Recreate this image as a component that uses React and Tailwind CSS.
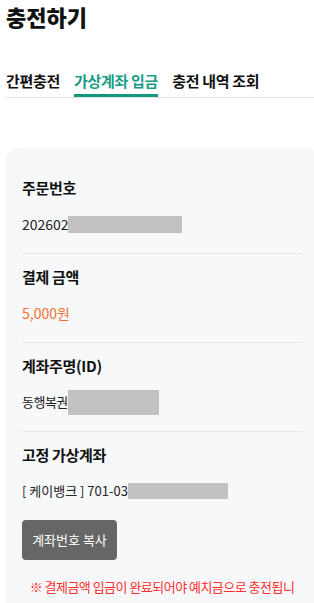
import React from 'react';

const Redact = ({ className }) => (
  <span className={`inline-block shrink-0 bg-[#c1c1c1] ${className}`} />
);

const Section = ({ label, children, first, last }) => (
  <div className={`${first ? 'pt-[18px]' : 'pt-[12px]'} ${last ? '' : 'pb-[18px] border-b border-[#e3e4e6]'}`}>
    <div className="text-[15px] font-bold leading-[22px] text-[#111] tracking-[-0.02em]">{label}</div>
    <div className="mt-[14px] h-[22px] text-[14px] leading-[22px] text-[#222] flex items-center">{children}</div>
  </div>
);

export default function App() {
  return (
    <div className="w-[314px] h-[603px] overflow-hidden bg-white font-['Noto_Sans_CJK_KR',sans-serif]">
      <h1 className="pl-[6px] text-[22px] leading-[32px] font-black text-[#111]">충전하기</h1>

      <div className="ml-[6px] mt-[39px] flex gap-[14px] border-b border-[#e2e2e2] text-[15px] font-bold tracking-[-0.02em]">
        <button className="pb-[3px] leading-[20px] border-b-[3px] border-transparent text-[#111]">간편충전</button>
        <button className="pb-[3px] leading-[20px] border-b-[3px] border-[#12967c] text-[#1a9c86]">가상계좌 입금</button>
        <button className="pb-[3px] leading-[20px] border-b-[3px] border-transparent text-[#111]">충전 내역 조회</button>
      </div>

      <div className="ml-[6px] mt-[50px] w-[312px] rounded-xl bg-[#f7f8fa] px-4 pt-[11px] pb-8">
        <Section label="주문번호" first>
          <span>202602</span>
          <Redact className="w-[114px] h-[17px] -ml-[1px]" />
        </Section>
        <Section label="결제 금액">
          <span className="text-[#f5702e]">5,000원</span>
        </Section>
        <Section label="계좌주명(ID)">
          <span className="text-[13px] tracking-[-0.04em]">동행복권</span>
          <Redact className="w-[91px] h-[25px]" />
        </Section>
        <Section label="고정 가상계좌" last>
          <span className="text-[13px]">[ 케이뱅크 ] 701-03</span>
          <Redact className="w-[100px] h-[16px]" />
        </Section>

        <button className="mt-[18px] h-[40px] w-[95px] rounded-[4px] bg-[#666666] text-[13px] text-white">
          계좌번호 복사
        </button>

        <p className="mx-auto mt-[14px] w-[274px] text-center text-[13px] leading-[26px] text-[#ff2f2f] tracking-[-0.04em]">
          ※ 결제금액 입금이 완료되어야 예치금으로 충전됩니다.
        </p>
      </div>
    </div>
  );
}
